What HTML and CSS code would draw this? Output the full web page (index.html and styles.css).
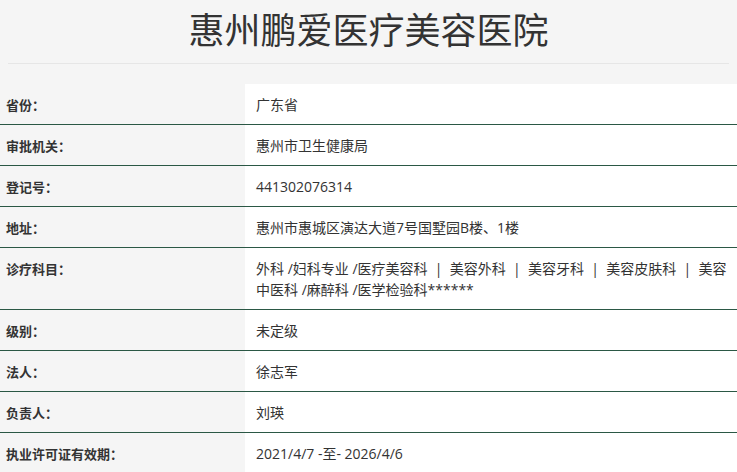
FILE: index.html
```html
<!DOCTYPE html>
<html lang="zh-CN">
<head>
<meta charset="utf-8">
<title>惠州鹏爱医疗美容医院</title>
<link rel="stylesheet" href="styles.css">
</head>
<body>
<h1 class="title">惠州鹏爱医疗美容医院</h1>
<hr class="divider">
<table class="info">
  <tr><th>省份：</th><td>广东省</td></tr>
  <tr><th>审批机关：</th><td>惠州市卫生健康局</td></tr>
  <tr><th>登记号：</th><td>441302076314</td></tr>
  <tr><th>地址：</th><td>惠州市惠城区演达大道7号国墅园B楼、1楼</td></tr>
  <tr><th>诊疗科目：</th><td>外科 /妇科专业 /医疗美容科 &nbsp;|&nbsp; 美容外科 &nbsp;|&nbsp; 美容牙科 &nbsp;|&nbsp; 美容皮肤科 &nbsp;|&nbsp; 美容中医科 /麻醉科 /医学检验科******</td></tr>
  <tr><th>级别：</th><td>未定级</td></tr>
  <tr><th>法人：</th><td>徐志军</td></tr>
  <tr><th>负责人：</th><td>刘瑛</td></tr>
  <tr><th>执业许可证有效期：</th><td>2021/4/7 -至- 2026/4/6</td></tr>
</table>
</body>
</html>
```
FILE: styles.css
```css
html, body {
  margin: 0;
  padding: 0;
  background: #f5f5f5;
  color: #333;
  font-family: "Open Sans", "Noto Sans CJK SC", sans-serif;
}
.title {
  margin: 0;
  padding-top: 6px;
  height: 44px;
  line-height: 44px;
  text-align: center;
  font-family: "Noto Sans CJK SC", sans-serif;
  font-weight: 400;
  font-size: 36px;
  color: #333;
}
.divider {
  margin: 13px 8px 20px;
  border: 0;
  border-top: 1px solid #e6e6e6;
  height: 0;
}
.info {
  width: 100%;
  border-collapse: collapse;
}
.info tr + tr {
  border-top: 1px solid #2b5845;
}
.info th {
  width: 245px;
  box-sizing: border-box;
  text-align: left;
  vertical-align: top;
  padding: 10px 6px 9px;
  font-family: "Noto Sans CJK SC", sans-serif;
  font-size: 13px;
  font-weight: 700;
  line-height: 21px;
  color: #333;
  background: #f5f5f5;
}
.info td {
  padding: 10px 8px 9px 11px;
  font-size: 14px;
  line-height: 21px;
  background: #fff;
  color: #333;
  vertical-align: top;
}
```
